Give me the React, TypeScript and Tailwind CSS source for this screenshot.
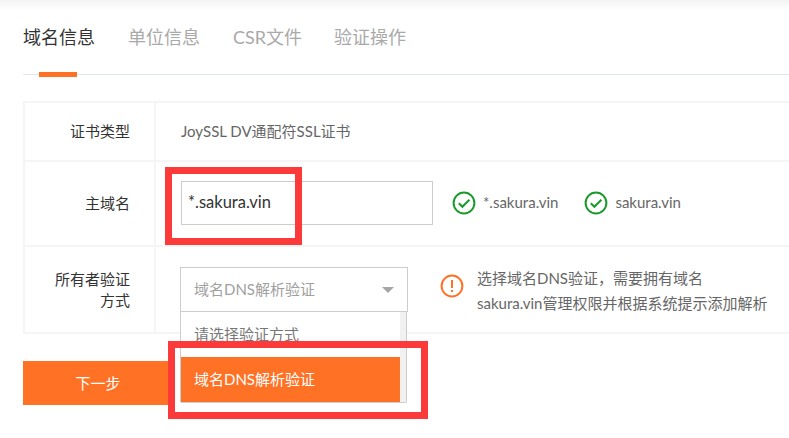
const font = { fontFamily: 'Lato, "Noto Sans CJK SC", sans-serif' };

function CheckIcon() {
  return (
    <svg width="24" height="24" viewBox="0 0 24 24" fill="none" className="shrink-0">
      <circle cx="12" cy="12" r="10.4" stroke="#1a9a2c" strokeWidth="2" />
      <path d="M6.8 12.2l3.6 3.6 7-7" stroke="#1a9a2c" strokeWidth="2" />
    </svg>
  );
}

function WarnIcon() {
  return (
    <svg width="24" height="24" viewBox="0 0 24 24" fill="none" className="shrink-0">
      <circle cx="12" cy="12" r="10.4" stroke="#ff7124" strokeWidth="2" />
      <path d="M12 6v8" stroke="#ff7124" strokeWidth="2" />
      <path d="M12 16v2" stroke="#ff7124" strokeWidth="2" />
    </svg>
  );
}

function Label({ children }: { children: React.ReactNode }) {
  return (
    <div className="w-[131px] shrink-0 border-r-2 border-[#f5f5f5] pl-[25px] pr-[24px] flex items-center justify-end text-right text-[15px] leading-[21px] text-[#333]">
      <div>{children}</div>
    </div>
  );
}

export default function App() {
  return (
    <div className="relative w-[789px] h-[438px] overflow-hidden bg-white" style={font}>
      <div className="h-[10px] bg-gradient-to-b from-[#f3f3f3] to-white" />
      <div className="pl-[23px]">
        <div className="relative h-[65px] border-b border-[#dfe8ee]">
          <div className="flex gap-[33px] pt-[14px] text-[18px] leading-[26px] text-[#a9a9a9]">
            <span className="text-[#333]">域名信息</span>
            <span>单位信息</span>
            <span>CSR文件</span>
            <span className="-ml-px">验证操作</span>
          </div>
          <div className="absolute left-[16px] bottom-[-3px] w-[38px] h-[5px] bg-[#ff7124]" />
        </div>

        <div className="mt-[26px] border-2 border-r-0 border-[#f5f5f5] ml-0 relative">
          <div className="flex h-[59px] border-b-2 border-[#f5f5f5]">
            <Label>证书类型</Label>
            <div className="flex items-center pl-[25px] text-[15px] text-[#666]">JoySSL DV通配符SSL证书</div>
          </div>
          <div className="flex h-[85px] border-b-2 border-[#f5f5f5]">
            <Label>主域名</Label>
            <div className="flex items-center pl-[25px] pb-[2px] text-[15px] text-[#666]">
              <div className="w-[252px] h-[44px] border border-[#ccc] flex items-center pl-[6px] text-[16.5px] text-[#333]">*.sakura.vin</div>
              <div className="ml-[19px] flex items-center gap-[7px]"><CheckIcon /><span>*.sakura.vin</span></div>
              <div className="ml-[26px] flex items-center gap-[7px]"><CheckIcon /><span>sakura.vin</span></div>
            </div>
          </div>
          <div className="flex h-[85px]">
            <Label>所有者验证<br />方式</Label>
            <div className="flex items-start pl-[24px] pt-[20px]">
              <div className="relative w-[228px] h-[45px] border border-[#ccc] flex items-center justify-between pl-[13px] pr-[13px] text-[15px] text-[#a0a0a0] bg-white">
                <span>域名DNS解析验证</span>
                <span className="w-0 h-0 border-x-[6px] border-x-transparent border-t-[6px] border-t-[#a5a5a5]" />
              </div>
              <div className="ml-[32px] mt-[7px]"><WarnIcon /></div>
              <div className="ml-[13px] -mt-px text-[15px] leading-[25px] text-[#666]">
                选择域名DNS验证，需要拥有域名<br />sakura.vin管理权限并根据系统提示添加解析
              </div>
            </div>
          </div>
        </div>

        <button className="mt-[27px] block w-[150px] h-[44px] bg-[#ff7124] text-white text-[15px]">下一步</button>
      </div>

      {/* dropdown */}
      <div className="absolute left-[180px] top-[312px] w-[227px] h-[91px] bg-white border-x border-b border-[#ccc] rounded-b-[2px] flex">
        <div className="w-[219px] shrink-0">
          <div className="h-[45px] flex items-center pl-[13px] text-[15px] text-[#777]">请选择验证方式</div>
          <div className="h-[45px] bg-[#ff7124] flex items-center pl-[13px] text-[15px] text-white">域名DNS解析验证</div>
        </div>
        <div className="flex-1 bg-[#f1f1f1]" />
      </div>

      {/* annotation boxes */}
      <div className="absolute left-[165px] top-[167px] w-[137px] h-[78px] border-[7px] border-[#fd3a3a]" />
      <div className="absolute left-[168px] top-[341px] w-[260px] h-[78px] border-[7px] border-[#fd3a3a]" />
    </div>
  );
}
